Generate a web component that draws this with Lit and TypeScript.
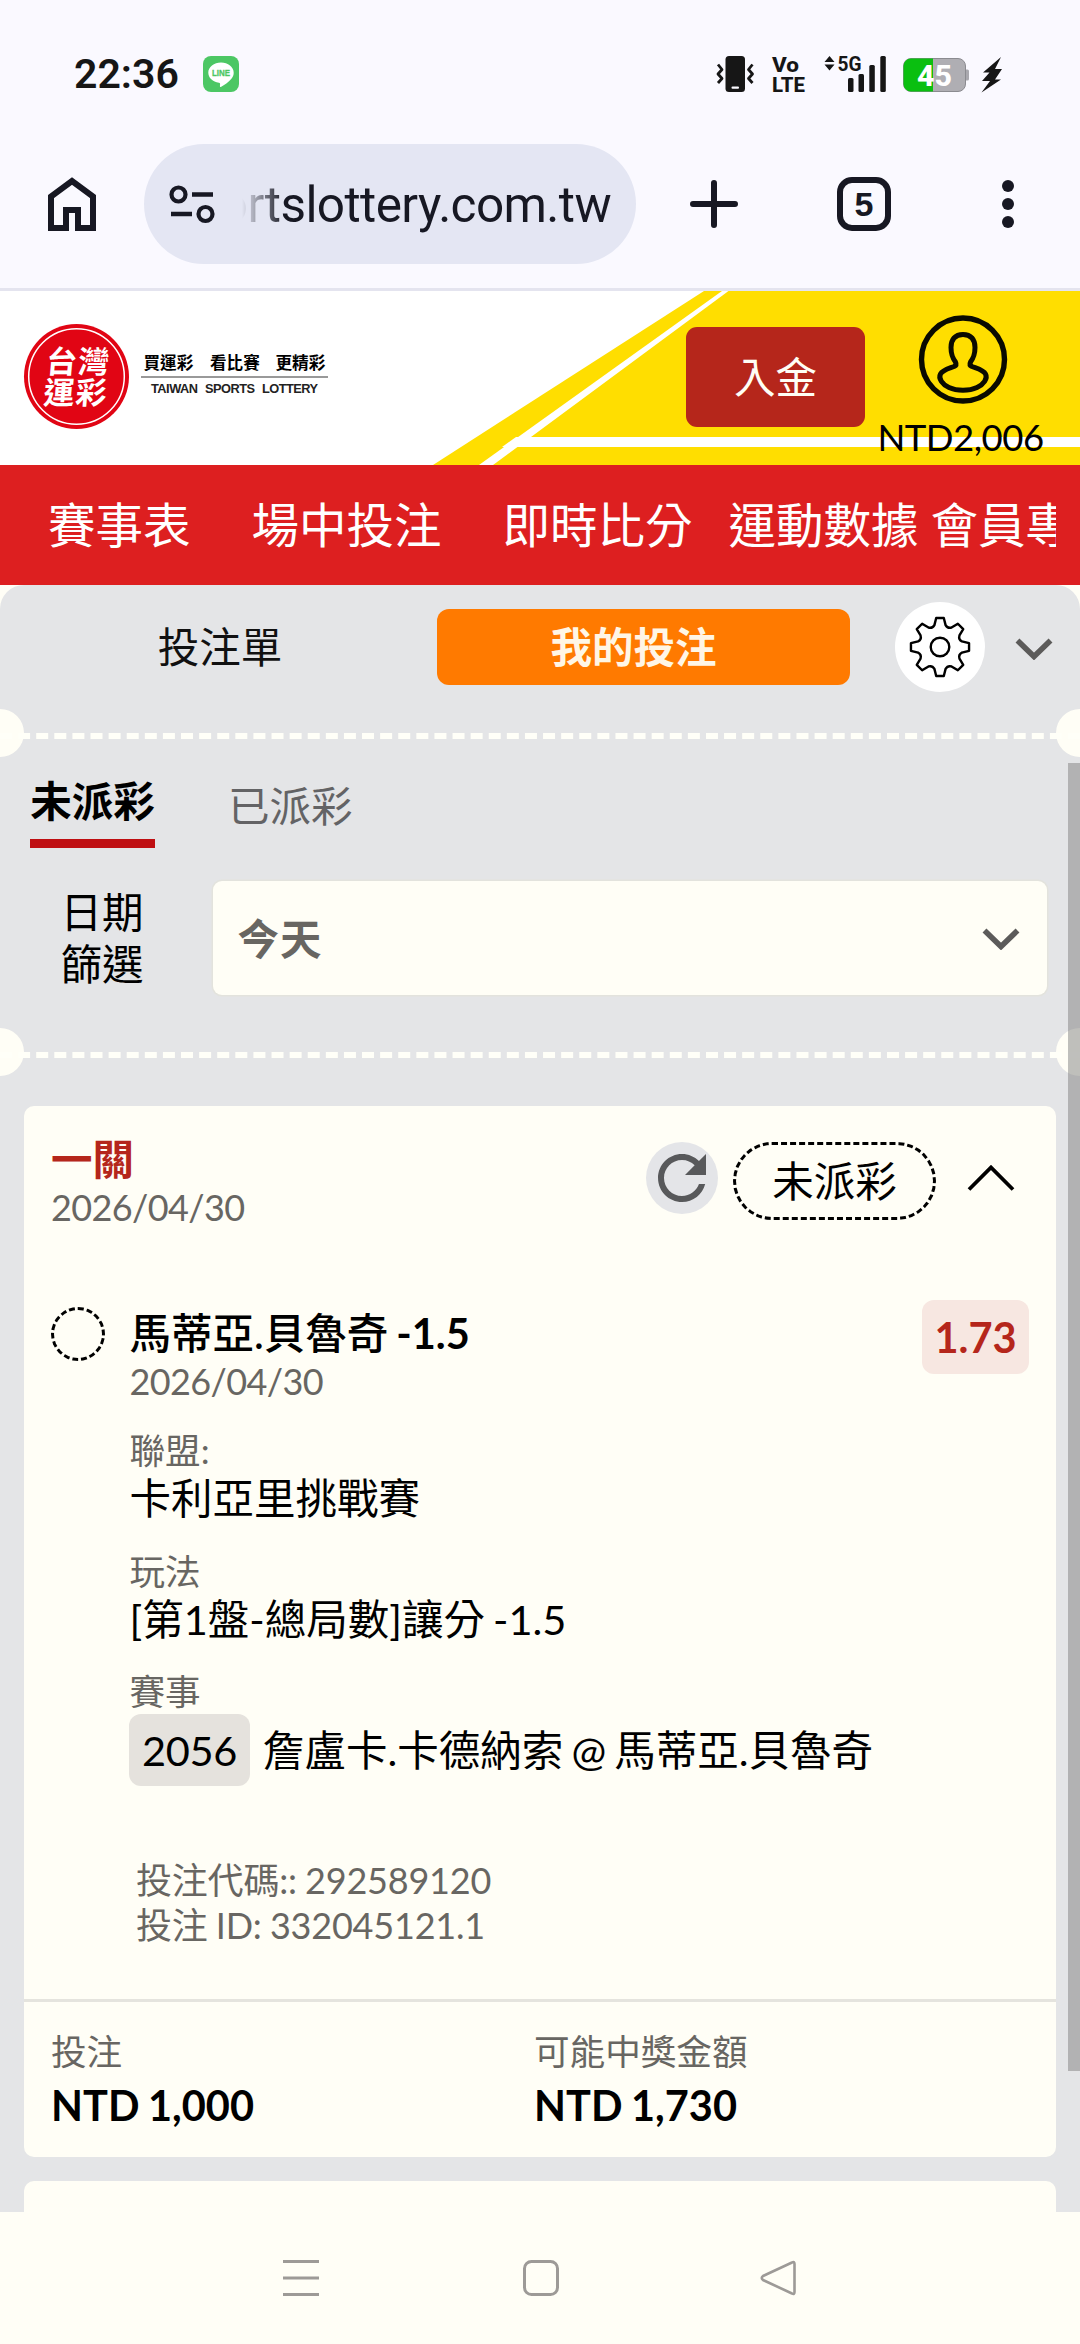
import { LitElement, html, css, svg } from "lit";
import { customElement } from "lit/decorators.js";

const GEAR_TEETH = 8;

/* Outline of the settings gear: alternating tooth tops and rounded valleys. */
function gearPath(cx: number, cy: number, outer: number, root: number): string {
  const step = (Math.PI * 2) / GEAR_TEETH;
  const pt = (r: number, a: number) =>
    `${(cx + r * Math.sin(a)).toFixed(2)} ${(cy - r * Math.cos(a)).toFixed(2)}`;
  let d = "";
  for (let i = 0; i < GEAR_TEETH; i++) {
    const a = i * step;
    d += `${i ? "L" : "M"}${pt(outer, a - 0.13)} L${pt(outer, a + 0.13)} L${pt(root + 1.6, a + 0.25)} `;
    d += `Q${pt(root - 1.2, a + step / 2)} ${pt(root + 1.6, a + step - 0.25)} `;
  }
  return d + "Z";
}

const NAV_ITEMS = [
  { label: "賽事表", cls: "n1" },
  { label: "場中投注", cls: "n2" },
  { label: "即時比分", cls: "n3" },
  { label: "運動數據", cls: "n4" },
  { label: "會員專區", cls: "n5" },
];

const DETAILS = [
  { label: "聯盟:", value: "卡利亞里挑戰賽" },
  { label: "玩法", value: "[第1盤-總局數]讓分 -1.5" },
];

const TOTALS = [
  { label: "投注", value: "NTD 1,000" },
  { label: "可能中獎金額", value: "NTD 1,730" },
];

@customElement("phone-status")
export class PhoneStatus extends LitElement {
  static styles = css`
    :host {
      display: flex;
      align-items: center;
      box-sizing: border-box;
      height: 119px;
      padding: 29px 78px 0 74px;
      color: #161616;
      font-family: Roboto, "Liberation Sans", sans-serif;
    }
    .clock {
      font-size: 41px;
      font-weight: 600;
      line-height: 44px;
      width: 129px;
    }
    .spacer {
      flex: 1;
    }
    svg {
      display: block;
      overflow: visible;
    }
    .tiny {
      font-family: Roboto, sans-serif;
      font-weight: 800;
    }
  `;
  render() {
    return html`
      <div class="clock">22:36</div>
      <svg width="36" height="36" viewBox="0 0 36 36">
        <rect width="36" height="36" rx="8" fill="#4cc764" />
        <path d="M18 6.500c-7 0-12.700 4.500-12.700 10.200 0 5 4.500 9.200 10.600 10 1.500.3 1.300 1 1 3.300 0 .9.500 1.100 1.300.7 3-1.700 7.500-4.800 10-7.800 1.700-1.800 2.500-3.900 2.500-6.200C30.700 11 25 6.500 18 6.500z" fill="#fff" />
        <text x="18" y="20" font-size="8.600" font-weight="700" text-anchor="middle" font-family="Liberation Sans" fill="#4cc764" stroke="#4cc764" stroke-width="0.300" textLength="18" lengthAdjust="spacingAndGlyphs">LINE</text>
      </svg>
      <div class="spacer"></div>
      <svg width="285" height="40" viewBox="717 54 285 40">
        <g fill="none" stroke="#161616" stroke-width="2.800" stroke-linejoin="round">
          <path d="M718 64.500l4 5-4 4.500 4 4.500-4 4.500" />
          <path d="M752.500 64.500l-4 5 4 4.500-4 4.500 4 4.500" />
        </g>
        <rect x="725.500" y="56" width="19.500" height="36" rx="3.500" fill="#161616" />
        <rect x="731.500" y="86.500" width="7.500" height="2.200" rx="1" fill="#faf9ff" />
        <g class="tiny" fill="#161616">
          <text x="772" y="71.500" font-size="21" textLength="27" lengthAdjust="spacingAndGlyphs">Vo</text>
          <text x="772" y="92" font-size="21" textLength="33" lengthAdjust="spacingAndGlyphs">LTE</text>
          <text x="837.500" y="71" font-size="21" font-weight="700" textLength="24" lengthAdjust="spacingAndGlyphs">5G</text>
        </g>
        <path d="M829.500 56l5 6h-10zM829.500 70.500l-5-6h10z" fill="#161616" />
        <g fill="#161616">
          <rect x="848" y="78" width="5.500" height="14" rx="1.500" />
          <rect x="858.500" y="74" width="5.500" height="18" rx="1.500" />
          <rect x="869.300" y="65" width="5.500" height="27" rx="1.500" />
          <rect x="880.300" y="56" width="5.500" height="36" rx="1.500" />
        </g>
        <path d="M966 69.500h1.500q1.500 0 1.500 1.500v8q0 1.500-1.500 1.500H966z" fill="#a9a8ae" />
        <rect x="903.500" y="58.500" width="62" height="33" rx="7.500" fill="#afaeb3" stroke="#8b8b90" />
        <path d="M933 58.500h-22a7.500 7.500 0 0 0-7.500 7.500v18a7.500 7.500 0 0 0 7.500 7.500h22z" fill="#0abf10" />
        <text x="934.500" y="86" class="tiny" font-size="30" fill="#fff" text-anchor="middle" textLength="35" lengthAdjust="spacingAndGlyphs">45</text>
        <path d="M1001 57L983 72.500h6.500L982 81h8L981.500 92.500 1001 79.500h-6L1002 69h-7z" fill="#161616" />
      </svg>
    `;
  }
}

@customElement("browser-bar")
export class BrowserBar extends LitElement {
  static styles = css`
    :host {
      display: flex;
      align-items: center;
      box-sizing: border-box;
      height: 172px;
      padding: 1px 66px 0 48px;
      border-bottom: 3px solid #e4e4ef;
      color: #171823;
    }
    svg {
      display: block;
      flex: none;
    }
    .omnibox {
      display: flex;
      align-items: center;
      box-sizing: border-box;
      width: 492px;
      height: 120px;
      margin-left: 48px;
      padding: 0 25px;
      border-radius: 60px;
      background: #e4e6f3;
    }
    .url {
      display: flex;
      justify-content: flex-end;
      width: 371px;
      margin-left: 27px;
      padding-top: 1px;
      overflow: hidden;
      font: 400 49.500px/66px Roboto, "Liberation Sans", sans-serif;
      letter-spacing: -0.6px;
      white-space: nowrap;
      -webkit-mask-image: linear-gradient(90deg, transparent 0, #000 42px);
      mask-image: linear-gradient(90deg, transparent 0, #000 42px);
    }
    .plus {
      margin-left: 54px;
    }
    .tabs {
      display: flex;
      align-items: center;
      justify-content: center;
      box-sizing: border-box;
      width: 54px;
      height: 54px;
      margin-left: 99px;
      border: 6px solid #171823;
      border-radius: 15px;
      font: 700 34px/42px "Liberation Sans", sans-serif;
    }
    .dots {
      margin-left: 111px;
    }
  `;
  render() {
    return html`
      <svg width="48" height="54" viewBox="0 0 48 54">
        <path d="M3 51V19.500L24 4l21 15.500V51H30V33H18v18z" fill="none" stroke="#171823" stroke-width="6" />
      </svg>
      <div class="omnibox">
        <svg width="46" height="40" viewBox="0 0 46 40" fill="none" stroke="#171823">
          <circle cx="9.500" cy="10.500" r="7" stroke-width="4.200" />
          <path d="M23 10.500h21M2 30h21" stroke-width="4.400" />
          <circle cx="36.500" cy="30" r="7" stroke-width="4.200" />
        </svg>
        <div class="url">ortslottery.com.tw</div>
      </div>
      <svg class="plus" width="48" height="48" viewBox="0 0 48 48">
        <path d="M3 24h42M24 3v42" stroke="#171823" stroke-width="6" stroke-linecap="round" />
      </svg>
      <div class="tabs">5</div>
      <svg class="dots" width="12" height="48" viewBox="0 0 12 48" fill="#171823">
        <circle cx="6" cy="6" r="6" />
        <circle cx="6" cy="24" r="6" />
        <circle cx="6" cy="42" r="6" />
      </svg>
    `;
  }
}

@customElement("site-header")
export class SiteHeader extends LitElement {
  static styles = css`
    :host {
      display: block;
      font-family: Lato, "Noto Sans CJK TC", sans-serif;
    }
    .banner {
      position: relative;
      display: flex;
      align-items: flex-start;
      height: 174px;
      overflow: hidden;
      background: #fff;
    }
    .rays {
      position: absolute;
      inset: 0;
    }
    svg {
      display: block;
    }
    .logo,
    .deposit,
    .account {
      position: relative;
    }
    .logo {
      margin: 32px 0 0 23px;
    }
    .deposit {
      margin: 36px 0 0 355px;
      width: 179px;
      height: 100px;
      border-radius: 11px;
      background: #b5261b;
      color: #fffef5;
      font-size: 41.500px;
      line-height: 100px;
      text-align: center;
    }
    .account {
      display: flex;
      flex-direction: column;
      align-items: center;
      width: 180px;
      margin: 23px 0 0 7px;
    }
    .account svg {
      margin-left: 2px;
    }
    .balance {
      font-size: 36.500px;
      letter-spacing: -0.5px;
      line-height: 44px;
      margin: 11px 3px 0 0;
      color: #000;
      white-space: nowrap;
    }
    nav {
      display: flex;
      align-items: center;
      height: 120px;
      padding: 0 24px 0 48px;
      background: #dd1f20;
    }
    .strip {
      display: flex;
      width: 1008px;
      overflow: hidden;
      color: #fff;
      font-size: 47.500px;
      line-height: 70px;
      white-space: nowrap;
    }
    .n2 {
      margin-left: 61px;
    }
    .n3 {
      margin-left: 61px;
    }
    .n4 {
      margin-left: 36px;
    }
    .n5 {
      margin-left: 12px;
    }
  `;
  render() {
    return html`
      <div class="banner">
        <svg class="rays" width="1080" height="174" viewBox="0 0 1080 174">
          <path d="M433 174L704 0h376v174z" fill="#ffde00" />
          <path d="M479 174L722 0h6.500L493 174z" fill="#fff" />
          <path d="M516 146h564v10H502z" fill="#fff" />
        </svg>
        <svg class="logo" width="308" height="108" viewBox="23 323 308 108">
          <circle cx="76.500" cy="376.500" r="52.500" fill="#e10514" />
          <circle cx="76.500" cy="376.500" r="47.800" fill="none" stroke="#fff" stroke-width="1.500" />
          <g fill="#fff" font-family="Noto Sans CJK TC" font-weight="700" font-size="31" text-anchor="middle" transform="translate(32 0) skewX(-5)">
            <text x="77.500" y="373" textLength="63">台灣</text>
            <text x="77.500" y="404" textLength="63">運彩</text>
          </g>
          <g fill="#000" font-family="Noto Sans CJK TC" font-weight="700" font-size="16.600">
            <text x="143.500" y="368.500">買運彩</text>
            <text x="210" y="368.500">看比賽</text>
            <text x="275.500" y="368.500">更精彩</text>
          </g>
          <path d="M141 377h187" stroke="#777" stroke-width="1.500" />
          <g fill="#222" font-family="Liberation Sans" font-weight="700" font-size="12.800">
            <text x="151" y="393" textLength="47">TAIWAN</text>
            <text x="205" y="393" textLength="50">SPORTS</text>
            <text x="262" y="393" textLength="56">LOTTERY</text>
          </g>
        </svg>
        <div class="deposit">入金</div>
        <div class="account">
          <svg width="90" height="90" viewBox="0 0 90 90" fill="none" stroke="#0a0a00">
            <circle cx="45" cy="45.500" r="41.500" stroke-width="5.400" />
            <path d="M45 20.500c-8 0-12 5-12 13 0 8 2 11 4.500 14.500 1 2 .5 3.500-1.500 4.500-5 2-11.500 3.500-13.500 7.500-2.500 4.500 2 10.500 8.500 13.500 8 3.700 20 3.700 28 0 6.500-3 11-9 8.500-13.500-2-4-8.500-5.500-13.500-7.500-2-1-2.500-2.500-1.500-4.500C55 44.500 57 41.500 57 33.500c0-8-4-13-12-13z" stroke-width="5" stroke-linejoin="round" />
          </svg>
          <div class="balance">NTD2,006</div>
        </div>
      </div>
      <nav>
        <div class="strip">
          ${NAV_ITEMS.map((n) => html`<span class=${n.cls}>${n.label}</span>`)}
        </div>
      </nav>
    `;
  }
}

@customElement("ticket-divider")
export class TicketDivider extends LitElement {
  static styles = css`
    :host {
      display: flex;
      justify-content: space-between;
      position: relative;
      height: 48px;
      overflow: hidden;
    }
    .notch {
      width: 24px;
      height: 48px;
      background: #fffef6;
    }
    .left {
      border-radius: 0 24px 24px 0;
    }
    .right {
      border-radius: 24px 0 0 24px;
    }
    .dashes {
      position: absolute;
      left: 0;
      right: 0;
      top: 24px;
      border-top: 6px dashed #fffff8;
    }
  `;
  render() {
    return html`
      <div class="notch left"></div>
      <div class="dashes"></div>
      <div class="notch right"></div>
    `;
  }
}

@customElement("bet-card")
export class BetCard extends LitElement {
  static styles = css`
    :host {
      display: block;
      box-sizing: border-box;
      height: 1051px;
      border-radius: 10px;
      background: #fffef6;
      color: #000;
      font-size: 41.500px;
      line-height: 48px;
      word-spacing: -2.5px;
    }
    svg {
      display: block;
    }
    .head {
      display: flex;
      align-items: flex-start;
      box-sizing: border-box;
      height: 194px;
      padding: 29px 40px 0 27px;
    }
    .kind {
      color: #b5261b;
      font-weight: 700;
    }
    .date,
    .label {
      color: #686662;
      font-size: 36px;
      line-height: 42px;
    }
    .date {
      letter-spacing: -0.6px;
    }
    .label {
      font-size: 35.600px;
    }
    .head .date {
      margin-top: 3px;
    }
    .tools {
      display: flex;
      align-items: center;
      margin: 7px 0 0 auto;
      height: 78px;
    }
    .refresh {
      width: 72px;
      height: 72px;
      margin-bottom: 6px;
      border-radius: 50%;
      background: #e4e5e8;
    }
    .state {
      box-sizing: border-box;
      width: 203px;
      height: 78px;
      margin: 0 29px 0 15px;
      border: 3px dashed #000;
      border-radius: 39px;
      line-height: 73px;
      text-align: center;
    }
    .caret {
      margin-bottom: 7px;
    }
    .leg {
      display: flex;
      align-items: flex-start;
      padding: 0 27px;
    }
    .ring {
      box-sizing: border-box;
      width: 54px;
      height: 54px;
      margin-top: 7px;
      border: 3px dashed #000;
      border-radius: 50%;
    }
    .info {
      flex: 1;
      padding: 9px 0 0 24.500px;
    }
    .pick {
      font-weight: 500;
    }
    .line {
      font-weight: 700;
    }
    .pick + .date {
      margin: 3px 0 28px;
    }
    .value {
      margin: 2px 0 28.500px;
      white-space: nowrap;
    }
    .match {
      display: flex;
      align-items: center;
      gap: 13px;
      height: 72px;
      margin-top: 1px;
      white-space: nowrap;
    }
    .code {
      box-sizing: border-box;
      width: 121px;
      margin-left: -0.5px;
      border-radius: 12px;
      background: #e5e2dd;
      line-height: 72px;
      text-align: center;
      letter-spacing: -0.3px;
    }
    .odds {
      width: 107px;
      margin-left: -107px;
      border-radius: 12px;
      background: #f7e7e1;
      color: #b5261b;
      font-weight: 700;
      line-height: 74px;
      text-align: center;
    }
    .ids {
      padding: 72px 0 0 112px;
      height: 141px;
      color: #686662;
      font-size: 36px;
      letter-spacing: -0.2px;
      word-spacing: -0.8px;
      line-height: 45px;
      white-space: nowrap;
    }
    .totals {
      display: flex;
      border-top: 3px solid #e5e4de;
      padding: 29px 27px 0;
    }
    .total {
      width: 483px;
    }
    .amount {
      margin-top: 8px;
      font-weight: 700;
      word-spacing: -1.5px;
    }
  `;
  render() {
    return html`
      <div class="head">
        <div>
          <div class="kind">一關</div>
          <div class="date">2026/04/30</div>
        </div>
        <div class="tools">
          <svg class="refresh" viewBox="0 0 24 24">
            <path fill="#58595b" d="M17.650 6.350C16.200 4.900 14.210 4 12 4c-4.420 0-7.990 3.580-7.990 8s3.570 8 7.990 8c3.730 0 6.840-2.550 7.730-6h-2.080c-.82 2.330-3.040 4-5.650 4-3.310 0-6-2.690-6-6s2.690-6 6-6c1.660 0 3.140.69 4.220 1.780L13 11h7V4l-2.350 2.350z" />
          </svg>
          <div class="state">未派彩</div>
          <svg class="caret" width="51" height="30" viewBox="0 0 51 30">
            <path d="M4 26.500L26 4.500 48 26.500" fill="none" stroke="#000" stroke-width="3.800" />
          </svg>
        </div>
      </div>
      <div class="leg">
        <div class="ring"></div>
        <div class="info">
          <div class="pick">馬蒂亞.貝魯奇 <span class="line">-1.5</span></div>
          <div class="date">2026/04/30</div>
          ${DETAILS.map(
            (d) => html`<div class="label">${d.label}</div>
              <div class="value">${d.value}</div>`
          )}
          <div class="label">賽事</div>
          <div class="match">
            <span class="code">2056</span>
            <span>詹盧卡.卡德納索 @ 馬蒂亞.貝魯奇</span>
          </div>
        </div>
        <div class="odds">1.73</div>
      </div>
      <div class="ids">
        <div>投注代碼:: 292589120</div>
        <div>投注 ID: 332045121.1</div>
      </div>
      <div class="totals">
        ${TOTALS.map(
          (t) => html`<div class="total">
            <div class="label">${t.label}</div>
            <div class="amount">${t.value}</div>
          </div>`
        )}
      </div>
    `;
  }
}

@customElement("app-root")
export class AppRoot extends LitElement {
  static styles = css`
    :host {
      display: flex;
      flex-direction: column;
      width: 1080px;
      height: 2344px;
      overflow: hidden;
      background: #faf9ff;
      font-family: Lato, "Noto Sans CJK TC", sans-serif;
    }
    svg {
      display: block;
    }
    .stage {
      height: 1627px;
      background: #fffef6;
    }
    .slip {
      position: relative;
      height: 1627px;
      overflow: hidden;
      border-radius: 24px 24px 0 0;
      background: #e4e5e7;
      color: #111;
      font-size: 41.500px;
      line-height: 48px;
    }
    .modes {
      display: flex;
      align-items: center;
      height: 124px;
    }
    .mode {
      box-sizing: border-box;
      width: 437px;
      padding-left: 3px;
      text-align: center;
    }
    .active {
      width: 413px;
      padding: 0 20px 0 0;
      border-radius: 12px;
      background: #ff7a00;
      color: #fff6e6;
      font-weight: 700;
      line-height: 76px;
    }
    .settings {
      width: 90px;
      height: 90px;
      margin-left: 45px;
      border-radius: 50%;
      background: #fff;
    }
    .fold {
      margin: 4px 0 0 30px;
    }
    .states {
      display: flex;
      align-items: flex-start;
      padding: 20px 30px 0;
      height: 86px;
    }
    .on {
      width: 125px;
      height: 62px;
      border-bottom: 9px solid #bf0f12;
      color: #000;
      font-weight: 700;
      text-align: center;
    }
    .off {
      margin: 5px 0 0 73px;
      color: #636365;
    }
    .filter {
      display: flex;
      align-items: center;
      height: 114px;
      padding: 18px 33px 33px 60px;
    }
    .caption {
      width: 84px;
      color: #000;
      line-height: 52px;
      text-align: center;
    }
    .select {
      display: flex;
      align-items: center;
      justify-content: space-between;
      box-sizing: border-box;
      width: 834px;
      height: 114px;
      margin-left: 69px;
      padding: 2px 27px 0 24.500px;
      border-radius: 9px;
      background: #fffef6;
      box-shadow: 0 0 0 1.500px #e3e3dd;
      color: #686662;
      font-weight: 700;
      letter-spacing: 1px;
    }
    .list {
      display: flex;
      flex-direction: column;
      gap: 24px;
      padding: 30px 24px 0;
    }
    .next {
      height: 60px;
      border-radius: 10px;
      background: #fffef6;
    }
    .thumb {
      position: absolute;
      right: 0;
      top: 178px;
      width: 12px;
      height: 1308px;
      background: rgba(128, 128, 128, 0.5);
    }
    .keys {
      display: flex;
      flex: 1;
      align-items: center;
      background: #fffef6;
      padding: 0 0 0 282px;
    }
    .home-key {
      margin-left: 202px;
    }
    .back-key {
      margin-left: 199px;
    }
  `;
  private chevron(cls = "") {
    return html`<svg class=${cls} width="38" height="22" viewBox="0 0 38 22">
      <path d="M2.500 2.500L19 18.500 35.500 2.500" fill="none" stroke="#5c5b5a" stroke-width="5.600" />
    </svg>`;
  }
  render() {
    return html`
      <phone-status></phone-status>
      <browser-bar></browser-bar>
      <site-header></site-header>
      <div class="stage">
        <div class="slip">
          <div class="modes">
            <div class="mode">投注單</div>
            <div class="mode active">我的投注</div>
            <svg class="settings" viewBox="0 0 90 90" fill="none" stroke="#000" stroke-width="2.400" stroke-linejoin="round">
              ${svg`<path d=${gearPath(45, 45, 29.3, 21)} />`}
              <circle cx="45" cy="45" r="9.300" />
            </svg>
            ${this.chevron("fold")}
          </div>
          <ticket-divider></ticket-divider>
          <div class="states">
            <div class="on">未派彩</div>
            <div class="off">已派彩</div>
          </div>
          <div class="filter">
            <div class="caption">日期<br />篩選</div>
            <div class="select"><span>今天</span>${this.chevron()}</div>
          </div>
          <ticket-divider></ticket-divider>
          <div class="list">
            <bet-card></bet-card>
            <div class="next"></div>
          </div>
          <div class="thumb"></div>
        </div>
      </div>
      <div class="keys">
        <svg width="38" height="38" viewBox="0 0 38 38">
          <path d="M1 2.500h36M1 19h36M1 35.500h36" stroke="#9d9a97" stroke-width="3" />
        </svg>
        <svg class="home-key" width="38" height="38" viewBox="0 0 38 38">
          <rect x="2.500" y="2.500" width="33" height="33" rx="7" fill="none" stroke="#9d9a97" stroke-width="3" />
        </svg>
        <svg class="back-key" width="38" height="38" viewBox="0 0 38 38">
          <path d="M33 3.500Q35.500 2 35.500 5v28q0 3-2.500 1.500L4 21Q1.500 19 4 17z" fill="none" stroke="#9d9a97" stroke-width="2.600" stroke-linejoin="round" />
        </svg>
      </div>
    `;
  }
}
